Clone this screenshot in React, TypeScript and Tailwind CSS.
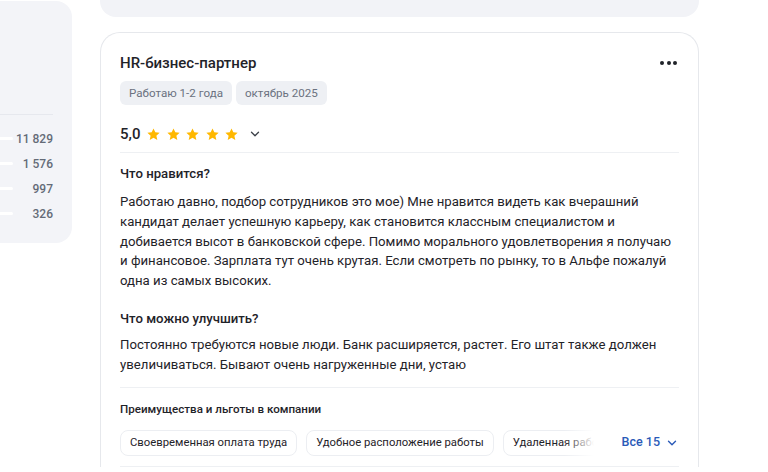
import { ChevronDown } from 'lucide-react';

const stats = ['11 829', '1 576', '997', '326'];

const Star = () => (
  <svg width="15" height="15" viewBox="0 0 24 24" className="shrink-0">
    <path
      d="M12 2.2l2.9 6.3 6.9.7-5.2 4.6 1.5 6.8L12 17.1l-6.1 3.5 1.5-6.8-5.2-4.6 6.9-.7z"
      fill="#ffb800"
    />
  </svg>
);

const Benefit = ({ children }: { children: React.ReactNode }) => (
  <div className="shrink-0 whitespace-nowrap rounded-lg border border-[#eceef2] px-[9px] py-[4px] text-[11.3px] leading-[16px] text-[#1f2329]">
    {children}
  </div>
);

const App = () => {
  return (
    <div
      className="flex h-[472px] w-[768px] gap-[28px] overflow-hidden bg-white text-[#1f2329]"
      style={{ fontFamily: 'Roboto, "Liberation Sans", sans-serif' }}
    >
      {/* left stats panel */}
      <div className="w-[72px] shrink-0 pt-px">
        <div className="flex h-[242px] flex-col rounded-r-2xl bg-[#f3f4f8] pr-[19px] pt-[113px]">
          <div className="h-px bg-[#e6e8ee]" />
          <div className="mt-[15px] flex flex-col gap-[8px]">
            {stats.map((s) => (
              <div key={s} className="flex h-[17px] items-center justify-between">
                <div className="h-[3px] w-[13px] rounded-r-full bg-white" />
                <span className="text-[12px] font-medium text-[#646b77]">{s}</span>
              </div>
            ))}
          </div>
        </div>
      </div>

      {/* main column */}
      <div className="flex w-[599px] shrink-0 flex-col gap-[15px]">
        <div className="h-[17px] shrink-0 rounded-b-2xl bg-[#f2f3f7]" />

        <div className="shrink-0 rounded-t-[20px] border border-b-0 border-[#e6e8ec] px-[19px] pt-[18px]">
          <div className="flex items-center justify-between">
            <h2 className="text-[15px] font-medium leading-[24px]">HR-бизнес-партнер</h2>
            <div className="mr-[2px] flex gap-[2.5px]">
              <span className="size-[4px] rounded-full bg-[#1f2329]" />
              <span className="size-[4px] rounded-full bg-[#1f2329]" />
              <span className="size-[4px] rounded-full bg-[#1f2329]" />
            </div>
          </div>

          <div className="mt-[6px] flex gap-[4px]">
            <span className="rounded-md bg-[#eef0f4] px-[9px] py-[4px] text-[11.6px] leading-[16px] text-[#6b7280]">
              Работаю 1-2 года
            </span>
            <span className="rounded-md bg-[#eef0f4] px-[9px] py-[4px] text-[11.6px] leading-[16px] text-[#6b7280]">
              октябрь 2025
            </span>
          </div>

          <div className="mt-[17px] flex h-[24px] items-center">
            <span className="text-[15px] font-medium">5,0</span>
            <div className="ml-[6px] flex gap-[4.5px]">
              <Star />
              <Star />
              <Star />
              <Star />
              <Star />
            </div>
            <ChevronDown className="ml-[9px] size-[14px] text-[#3a3f47]" strokeWidth={2.2} />
          </div>

          <div className="mt-[6px] h-px bg-[#eef0f3]" />

          <h3 className="mt-[11px] text-[13.2px] font-medium leading-[20px]">Что нравится?</h3>
          <p className="mt-[8px] text-[13.2px] leading-[19.8px]">
            Работаю давно, подбор сотрудников это мое) Мне нравится видеть как вчерашний
            кандидат делает успешную карьеру, как становится классным специалистом и
            добивается высот в банковской сфере. Помимо морального удовлетворения я получаю
            и финансовое. Зарплата тут очень крутая. Если смотреть по рынку, то в Альфе пожалуй
            одна из самых высоких.
          </p>

          <h3 className="mt-[18px] text-[13.2px] font-medium leading-[20px]">Что можно улучшить?</h3>
          <p className="mt-[6px] text-[13.2px] leading-[19.8px]">
            Постоянно требуются новые люди. Банк расширяется, растет. Его штат также должен
            увеличиваться. Бывают очень нагруженные дни, устаю
          </p>

          <div className="mt-[12px] h-px bg-[#eef0f3]" />

          <h4 className="mt-[12px] text-[11.6px] font-medium leading-[18px]">
            Преимущества и льготы в компании
          </h4>

          <div className="mt-[12px] flex items-center">
            <div className="relative flex w-[475px] gap-[9px] overflow-hidden">
              <Benefit>Своевременная оплата труда</Benefit>
              <Benefit>Удобное расположение работы</Benefit>
              <Benefit>Удаленная работа</Benefit>
              <div className="absolute inset-y-0 right-0 w-[30px] bg-gradient-to-r from-white/0 to-white" />
            </div>
            <button className="ml-[28px] flex shrink-0 items-center gap-[5px] whitespace-nowrap text-[12.5px] font-medium text-[#2a5ab8]">
              Все 15
              <ChevronDown className="size-[14px]" strokeWidth={2.4} />
            </button>
          </div>

          <div className="mt-[10px] h-px bg-[#eef0f3]" />
        </div>
      </div>
    </div>
  );
};

export default App;
